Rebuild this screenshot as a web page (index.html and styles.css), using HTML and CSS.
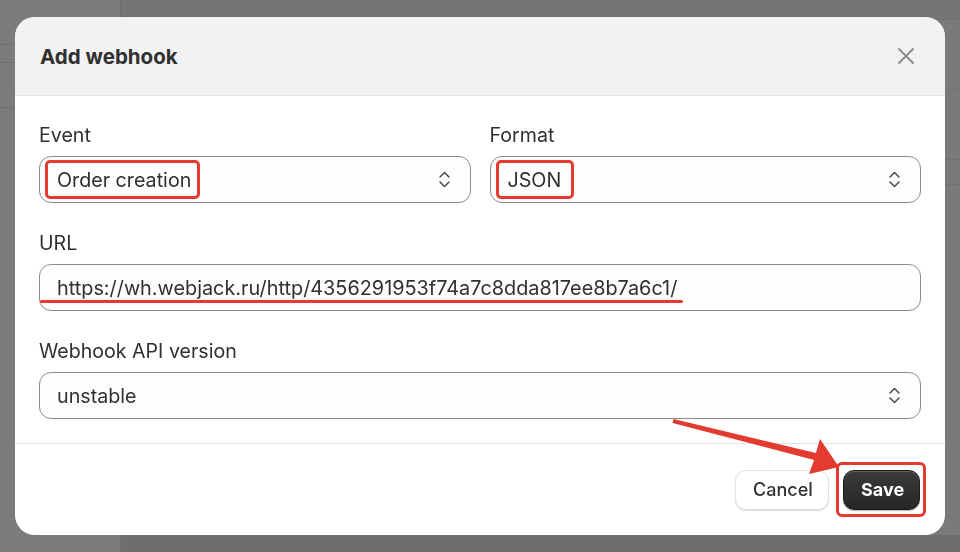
FILE: index.html
```html
<!DOCTYPE html>
<html lang="en">
<head>
  <meta charset="UTF-8" />
  <meta name="viewport" content="width=device-width, initial-scale=1.0"/>
  <title>Add webhook</title>
  <link rel="stylesheet" href="styles.css">
</head>
<body>
  <div class="page">
    <aside class="nav">
      <div class="nav-row"></div>
      <div class="nav-row short"></div>
      <div class="nav-row"></div>
    </aside>
    <main class="content">
      <div class="content-top"></div>
      <div class="content-row"></div>
      <div class="content-row"></div>
      <div class="content-row small"></div>
      <div class="content-fill"></div>
      <div class="content-bottom"></div>
    </main>
  </div>

  <div class="backdrop">
    <div class="modal" role="dialog" aria-labelledby="modalTitle">
      <div class="modal-header">
        <h2 id="modalTitle">Add webhook</h2>
        <button class="close-btn" aria-label="Close">
          <svg width="16" height="16" viewBox="0 0 16 16"><path d="M1 1 L15 15 M15 1 L1 15" stroke="#8a8a8a" stroke-width="1.8" stroke-linecap="round"/></svg>
        </button>
      </div>

      <div class="modal-body">
        <div class="field-row">
          <div class="field">
            <label>Event</label>
            <div class="select">
              <span class="value marked">Order creation</span>
              <svg class="chevrons" width="13" height="19" viewBox="0 0 13 19"><path d="M2 7 L6.5 2.5 L11 7 M2 12 L6.5 16.5 L11 12" fill="none" stroke="#4a4a4a" stroke-width="1.5" stroke-linecap="round" stroke-linejoin="round"/></svg>
            </div>
          </div>
          <div class="field">
            <label>Format</label>
            <div class="select">
              <span class="value marked wide">JSON</span>
              <svg class="chevrons" width="13" height="19" viewBox="0 0 13 19"><path d="M2 7 L6.5 2.5 L11 7 M2 12 L6.5 16.5 L11 12" fill="none" stroke="#4a4a4a" stroke-width="1.5" stroke-linecap="round" stroke-linejoin="round"/></svg>
            </div>
          </div>
        </div>

        <div class="field">
          <label>URL</label>
          <div class="input">
            <span class="value underlined">https://wh.webjack.ru/http/4356291953f74a7c8dda817ee8b7a6c1/</span>
          </div>
        </div>

        <div class="field">
          <label>Webhook API version</label>
          <div class="select">
            <span class="value">unstable</span>
            <svg class="chevrons" width="13" height="19" viewBox="0 0 13 19"><path d="M2 7 L6.5 2.5 L11 7 M2 12 L6.5 16.5 L11 12" fill="none" stroke="#4a4a4a" stroke-width="1.5" stroke-linecap="round" stroke-linejoin="round"/></svg>
          </div>
        </div>
      </div>

      <div class="modal-footer">
        <button class="btn btn-secondary">Cancel</button>
        <button class="btn btn-primary">Save</button>
      </div>

      <!-- pointer to the save button -->
      <svg class="arrow" width="190" height="70" viewBox="655 410 190 70">
        <polygon points="673.5,419 815.9,453.1 820,439 839,467 809,474 814.1,459.9 672.5,422.9" fill="#e33b2f"/>
      </svg>
    </div>
  </div>
</body>
</html>
```

FILE: styles.css
```css
* {
  box-sizing: border-box;
}

html, body {
  height: 100%;
  margin: 0;
  font-family: Inter, 'Noto Sans', sans-serif;
  background: #7a7a7a;
  color: #303030;
}

/* dimmed admin page behind the modal */
.page {
  display: flex;
  height: 100vh;
}

.nav {
  width: 121px;
  border-right: 1px solid #707070;
  background: #7b7b7b;
}

.nav-row {
  height: 45px;
  border-bottom: 1px solid #6f6f6f;
}

.nav-row.short {
  height: 18px;
}

.content {
  flex: 1;
  display: flex;
  flex-direction: column;
}

.content-top {
  height: 20px;
  background: #757575;
  border-bottom: 1px solid #6f6f6f;
}

.content-row {
  height: 70px;
  border-bottom: 1px solid #727272;
}

.content-row.small {
  height: 25px;
}

.content-fill {
  flex: 1;
}

.content-bottom {
  height: 17px;
  background: #6e6e6e;
}

.backdrop {
  position: fixed;
  inset: 0;
  display: flex;
  align-items: center;
  justify-content: center;
}

.modal {
  position: relative;
  width: 930px;
  height: 518px;
  background: #fff;
  border-radius: 20px;
  overflow: hidden;
  display: flex;
  flex-direction: column;
}

.modal-header {
  height: 79px;
  background: #f2f2f2;
  border-bottom: 1px solid #e3e3e3;
  display: flex;
  align-items: center;
  justify-content: space-between;
  padding: 0 31px 0 25px;
}

.modal-header h2 {
  margin: 0;
  font-size: 20.5px;
  font-weight: 700;
  color: #303030;
}

.close-btn {
  border: none;
  background: none;
  padding: 0;
  width: 16px;
  height: 16px;
  display: flex;
}

.modal-body {
  flex: 1;
  padding: 27px 24px 0 24px;
  display: flex;
  flex-direction: column;
  gap: 28px;
  border-bottom: 1px solid #e3e3e3;
}

.field-row {
  display: grid;
  grid-template-columns: 1fr 1fr;
  gap: 19px;
}

.field {
  display: flex;
  flex-direction: column;
  gap: 9px;
}

.field label {
  font-size: 19.6px;
  line-height: 24px;
  color: #303030;
}

.select,
.input {
  height: 47px;
  border: 1px solid #8a8a8a;
  border-radius: 12px;
  background: #fdfdfd;
  display: flex;
  align-items: center;
  justify-content: space-between;
  padding: 0 19px 0 17px;
}

.value {
  position: relative;
  font-size: 19.7px;
  line-height: 24px;
  color: #303030;
}

.value.underlined {
  font-size: 19.85px;
}

.chevrons {
  flex: none;
}

/* red annotation marks */
.marked::after {
  content: '';
  position: absolute;
  left: -12px;
  right: -9px;
  top: -8px;
  bottom: -7px;
  border: 3.5px solid #e33b2f;
  border-radius: 5px;
}

.marked.wide::after {
  right: -13px;
}

.underlined::after {
  content: '';
  position: absolute;
  left: -17px;
  right: -6px;
  bottom: -3px;
  height: 3px;
  background: #e33b2f;
  border-radius: 2px;
}

.modal-footer {
  height: 91px;
  display: flex;
  align-items: center;
  justify-content: flex-end;
  gap: 14px;
  padding: 0 25px 0 0;
}

.btn {
  position: relative;
  height: 40px;
  border-radius: 11px;
  font-family: Inter, 'Noto Sans', sans-serif;
  font-size: 18px;
  padding: 0 17px;
}

.btn-secondary {
  width: 94px;
  background: #fff;
  color: #303030;
  font-weight: 550;
  border: 1px solid #e1e1e1;
  box-shadow: 0 1px 1px rgba(0, 0, 0, 0.15);
}

.btn-primary {
  width: 77px;
  background: linear-gradient(#3b3b3b, #262626);
  color: #fff;
  font-weight: 700;
  border: 1px solid #1a1a1a;
  box-shadow: inset 0 1px 0 rgba(255, 255, 255, 0.2), 0 1px 1px rgba(0, 0, 0, 0.3);
}

.btn-primary::after {
  content: '';
  position: absolute;
  left: -8px;
  right: -7px;
  top: -9px;
  bottom: -8px;
  border: 3.5px solid #e33b2f;
  border-radius: 6px;
}

.arrow {
  position: absolute;
  left: 640px;
  top: 393px;
  pointer-events: none;
}
```
